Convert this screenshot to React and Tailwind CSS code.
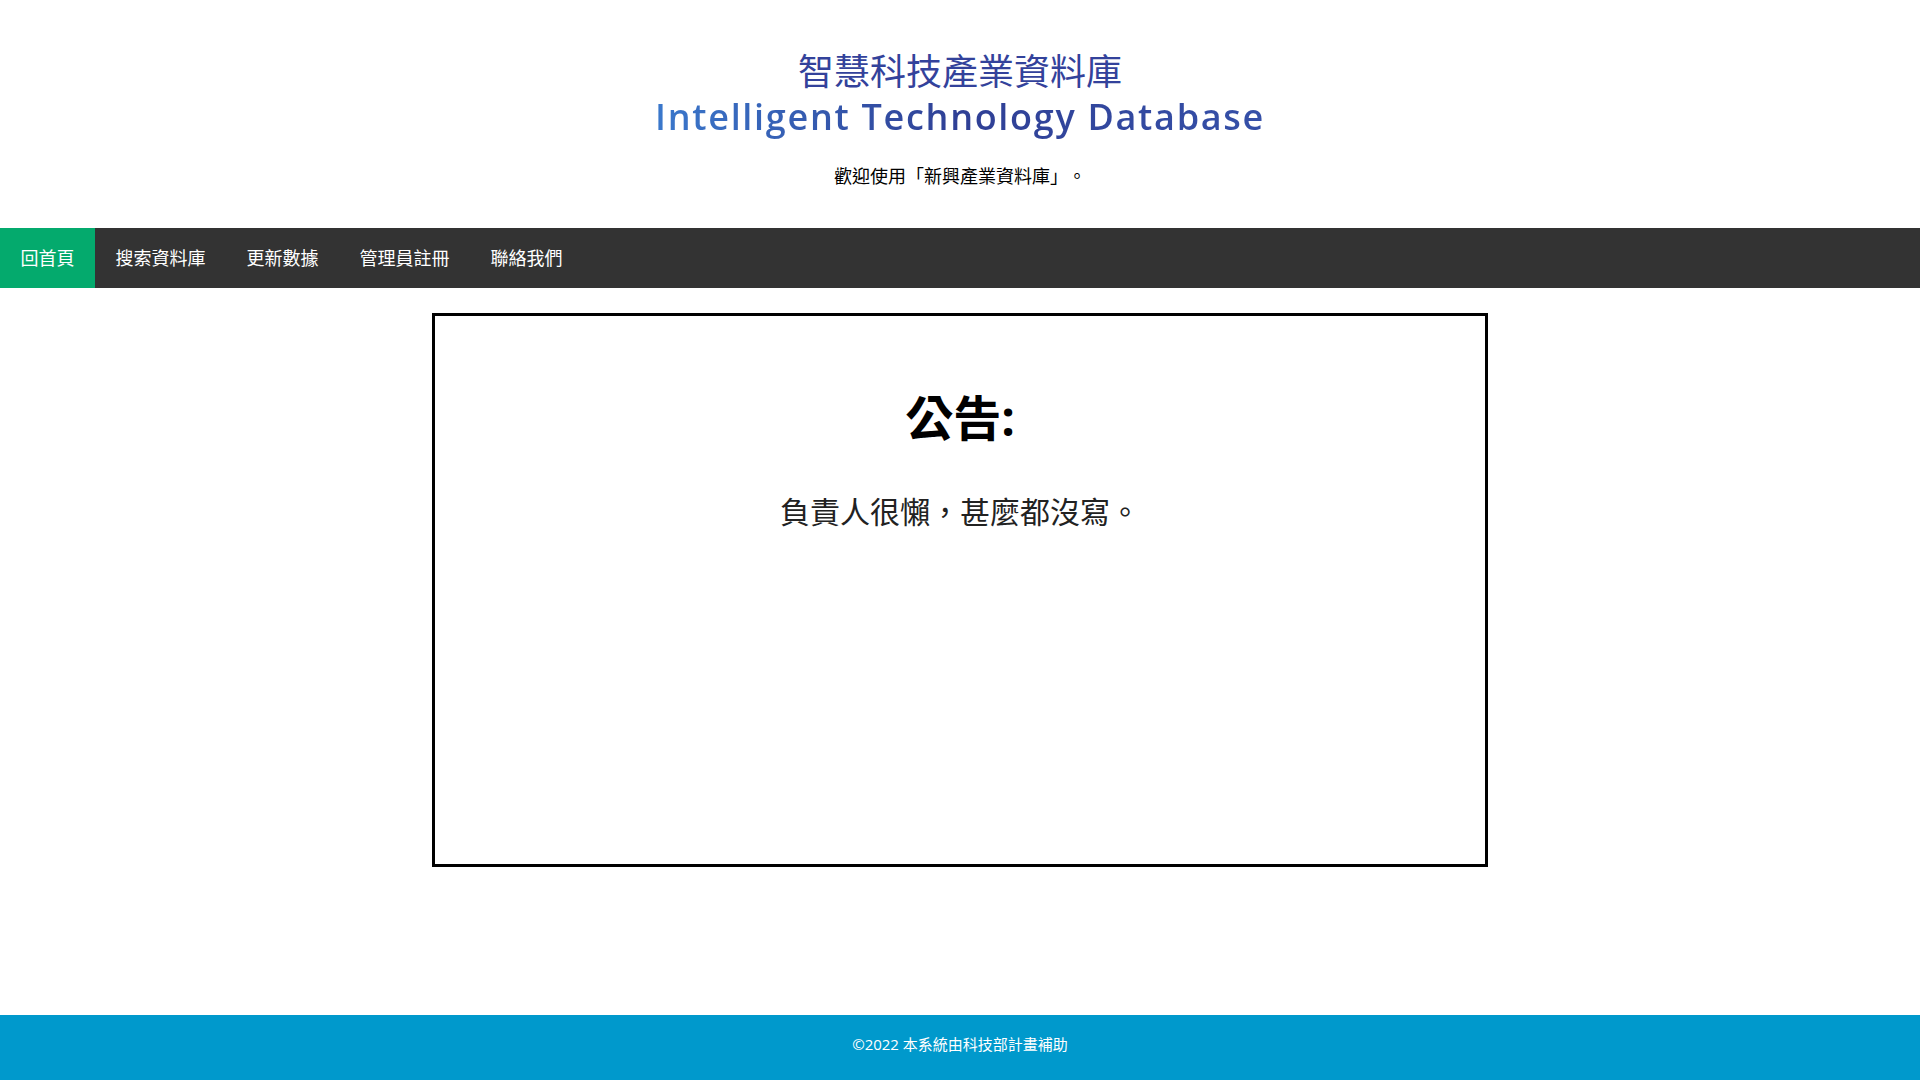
const cjk = { fontFamily: '"Open Sans", "Noto Sans CJK TC", sans-serif' };

const links = ['回首頁', '搜索資料庫', '更新數據', '管理員註冊', '聯絡我們'];

export default function App() {
  return (
    <div className="flex h-screen flex-col bg-white [text-spacing-trim:space-all]" style={cjk}>
      <header className="pt-[49px] text-center">
        <h1 className="text-[36px] leading-[45px] font-normal text-[#33429b]">智慧科技產業資料庫</h1>
        <h1 className="text-[36px] leading-[45px] font-semibold tracking-[1.7px]">
          <span className="bg-gradient-to-r from-[#3a78cc] via-[#2f3f95] to-[#3550a8] bg-clip-text text-transparent">
            Intelligent Technology Database
          </span>
        </h1>
        <p className="mt-[24px] text-[18px] leading-[26px] text-black">歡迎使用「新興產業資料庫」。</p>
      </header>

      <nav className="mt-[39px] flex h-[60px] bg-[#333333]">
        {links.map((label, i) => (
          <a
            key={label}
            href="#"
            className={
              'flex items-center px-[20.5px] text-[18px] text-white ' +
              (i === 0 ? 'bg-[#04aa6d]' : 'hover:bg-[#ddd] hover:text-black')
            }
          >
            {label}
          </a>
        ))}
      </nav>

      <main className="mx-auto mt-[25px] flex h-[554px] w-[55%] flex-col items-center border-[3px] border-black">
        <h2 className="mt-[67px] text-[48px] leading-[70px] font-bold text-black">公告:</h2>
        <p className="mt-[37px] text-[30px] leading-[44px] text-[#222]">負責人很懶，甚麼都沒寫。</p>
      </main>

      <footer className="mt-auto flex h-[65px] items-center justify-center bg-[#0099cc] pb-[7px] text-[15px] text-white">
        ©2022 本系統由科技部計畫補助
      </footer>
    </div>
  );
}
